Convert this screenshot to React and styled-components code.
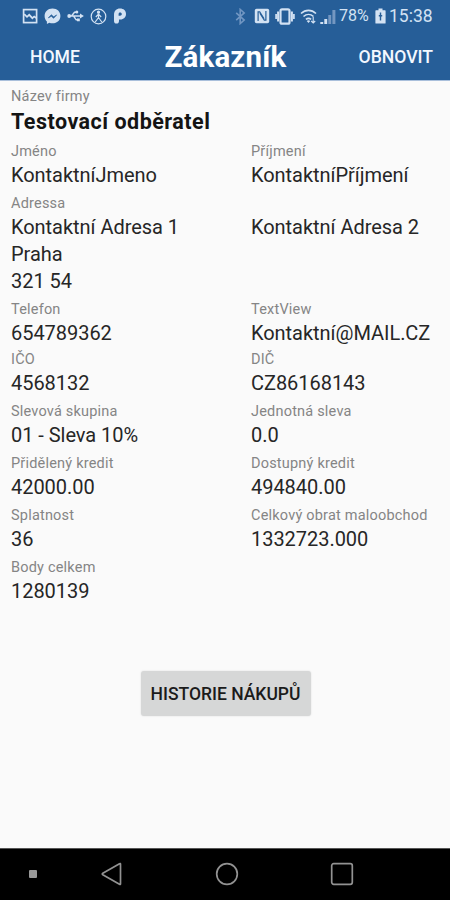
import React from 'react';
import styled, { createGlobalStyle } from 'styled-components';

const GlobalStyle = createGlobalStyle`
  * { box-sizing: border-box; }
  body { margin: 0; background: #fafafa; font-family: Roboto, "Liberation Sans", sans-serif; }
`;

const Screen = styled.div`
  width: 450px;
  height: 900px;
  display: flex;
  flex-direction: column;
  background: #fafafa;
  overflow: hidden;
`;

const Header = styled.header`
  height: 81px;
  flex: none;
  background: #265e98;
  border-bottom: 1px solid #a9bfdb;
`;

const StatusBar = styled.div`
  height: 32px;
  padding: 0 18px 0 22px;
  display: flex;
  align-items: center;
  justify-content: space-between;
  color: #d3e2f3;
`;

const StatusGroup = styled.div`
  display: flex;
  align-items: center;
  gap: ${(p) => p.$gap}px;
  svg { display: block; flex: none; }
`;

const StatusText = styled.span`
  width: ${(p) => p.$width}px;
  font-size: ${(p) => p.$size}px;
  line-height: 20px;
  white-space: nowrap;
`;

const Toolbar = styled.div`
  height: 48px;
  padding: 0 17px 0 30px;
  display: grid;
  grid-template-columns: 134.5px auto 1fr;
  align-items: center;
  color: #fff;
`;

const ToolbarButton = styled.button`
  border: 0;
  padding: 1px 0 0;
  background: none;
  color: #f3f8ff;
  font: 500 17.6px/24px Roboto, sans-serif;
  justify-self: ${(p) => p.$side};
`;

const Title = styled.h1`
  margin: 0;
  padding-top: 1px;
  font-size: 29.5px;
  line-height: 36px;
  font-weight: 700;
  letter-spacing: 0.15px;
`;

const Details = styled.main`
  flex: 1;
  padding: 5px 0 0 11px;
  display: flex;
  flex-direction: column;
`;

const Row = styled.section`
  display: grid;
  grid-template-columns: 240px 1fr;
  height: ${(p) => p.$height || 52}px;
`;

const Field = styled.div`
  white-space: nowrap;
`;

const Label = styled.div`
  height: 21px;
  font-size: 14.5px;
  line-height: 21px;
  letter-spacing: 0.2px;
  color: #858585;
`;

const Value = styled.div`
  font-size: ${(p) => (p.$bold ? 21.5 : 20)}px;
  line-height: 27px;
  letter-spacing: ${(p) => (p.$bold ? 0.48 : -0.04)}px;
  font-weight: ${(p) => (p.$bold ? 700 : 400)};
  padding-top: ${(p) => (p.$bold ? 1 : 0)}px;
  color: ${(p) => (p.$bold ? '#141414' : '#262626')};
`;

const HistoryButton = styled.button`
  width: 170px;
  height: 45px;
  margin: 62px 0 0 129.5px;
  padding: 0;
  border: 0;
  border-radius: 3px;
  background: #d6d7d7;
  color: #1b1b1b;
  font: 500 17.5px/46px Roboto, sans-serif;
  white-space: nowrap;
  box-shadow: 0 0 2px #dcdddd;
`;

const NavBar = styled.nav`
  height: 52px;
  flex: none;
  background: #000;
  border-top: 1px solid #555;
  padding-bottom: 2px;
  display: grid;
  grid-template-columns: 65px 94px 136px 94px 61px;
  align-items: center;
  justify-items: center;
  svg { display: block; }
`;

const PictureIcon = () => (
  <svg width="16" height="16" viewBox="0 0 16 16" fill="none" stroke="currentColor" strokeWidth="1.7">
    <rect x="1.6" y="1.6" width="13" height="13" />
    <path d="M2.200 6.200 5 8.800l2.200-2 3.200 3.400 1.800-1.700 2.200 1.500" />
  </svg>
);

const MessengerIcon = () => (
  <svg width="17" height="17" viewBox="0 0 17 17">
    <path d="M8.500.5C3.800.5.6 3.700.6 8c0 2.300.9 4.200 2.300 5.500V16l2.400-1.300c1 .4 2.100.5 3.200.5 4.700 0 7.900-3.100 7.900-7.300S13.200.5 8.500.5Z" fill="currentColor" />
    <path d="m4.300 9.900 3-3.200 2.400 2.100 3-1.900-3.100 3.400-2.300-2Z" fill="#265e98" stroke="#265e98" strokeWidth=".6" />
  </svg>
);

const UsbIcon = () => (
  <svg width="17" height="14" viewBox="0 0 17 14" fill="none" stroke="currentColor" strokeWidth="1.400">
    <path d="M2 7h12M4.500 7l3-3.800H9M6.500 7l2.700 3.800h1.500" />
    <circle cx="2.200" cy="7" r="1.900" fill="currentColor" stroke="none" />
    <circle cx="9.800" cy="3" r="1.500" fill="currentColor" stroke="none" />
    <path d="M10 9.500h2.800v2.800H10zM13 4.600 16.900 7 13 9.400z" fill="currentColor" stroke="none" />
  </svg>
);

const PersonCircleIcon = () => (
  <svg width="17" height="17" viewBox="0 0 17 17" fill="none" stroke="currentColor" strokeWidth="1.200">
    <circle cx="8.500" cy="8.500" r="7.300" />
    <circle cx="8.500" cy="4.200" r="1" fill="currentColor" />
    <path d="M8.500 5.500v4L5.200 14M8.500 9.500l3.300 4.500M8.500 6.200 5.800 9M8.500 6.200 11.200 9" />
  </svg>
);

const ParkingIcon = () => (
  <svg width="14" height="16" viewBox="0 0 14 16">
    <path fillRule="evenodd" d="M1 7C1 3 3.400.6 7 .6c3.700 0 6 2.200 6 5.300s-2.300 5.500-5.600 5.500H6V13c0 1.600-.9 2.600-2.500 2.600S1 14.600 1 13ZM5.600 7.700H7c1.100 0 1.800-.7 1.800-1.700S8.100 4.400 7.100 4.400s-1.500.6-1.500 1.600Z" fill="currentColor" />
  </svg>
);

const BluetoothIcon = () => (
  <svg width="11" height="17" viewBox="0 0 11 17" fill="none" stroke="#7196c2" strokeWidth="1.600">
    <path d="m1.200 4.900 8 7.200-4 3.500V1.400l4 3.500-8 7.200" />
  </svg>
);

const NfcIcon = () => (
  <svg width="16" height="16" viewBox="0 0 16 16">
    <path d="M2.500.8h11q1.700 0 1.700 1.700v11q0 1.700-1.700 1.700h-11Q.8 15.200.8 13.500v-11Q.8.800 2.500.8Z" fill="currentColor" />
    <path d="M4.100 13V3.800h1.600l4.400 6.900M11.900 3v9.200h-1.600L5.900 5.300" fill="none" stroke="#265e98" strokeWidth="1.200" />
  </svg>
);

const VibrateIcon = () => (
  <svg width="20" height="17" viewBox="0 0 20 17" fill="none" stroke="currentColor">
    <rect x="5.500" y="1.300" width="9" height="14.400" rx="1.500" strokeWidth="2.200" />
    <path d="M3.100 3.500v10M16.900 3.500v10" strokeWidth="2" />
    <path d="M1.100 6v5M18.900 6v5" strokeWidth="1.700" />
  </svg>
);

const WifiIcon = () => (
  <svg width="17" height="16" viewBox="0 0 17 16" fill="none" stroke="currentColor" strokeWidth="1.600">
    <path d="M1 5.500c4.500-4.200 10.500-4.200 15 0M3.500 8.500c3-2.700 7-2.700 10 0M5.900 11.400c1.600-1.300 3.600-1.300 5.200 0" />
    <path d="m8.500 15-1.800-2c1-.9 2.600-.9 3.600 0Z" fill="currentColor" stroke="none" />
    <path d="M13.200 9v6M11.200 13l2 2 2-2" strokeWidth="1.100" />
  </svg>
);

const SignalIcon = () => (
  <svg width="16" height="15" viewBox="0 0 16 15">
    <path d="M.3 13h2.900v2H.3zM4.300 10h2.900v5H4.300z" fill="currentColor" />
    <path d="M8.300 6h2.900v9H8.300zM12.400 1h3v14h-3z" fill="#7497c1" />
  </svg>
);

const BatteryIcon = () => (
  <svg width="11" height="16" viewBox="0 0 11 16">
    <path d="M3.500.5h4v1.800H10q.6 0 .6.600v12q0 .6-.6.600H1q-.6 0-.6-.6v-12q0-.6.6-.6h2.500Z" fill="currentColor" />
    <path d="M5.500 4.500v8M3.800 7.800h3.400" stroke="#265e98" strokeWidth="1.400" />
  </svg>
);

const rows = [
  { height: 55, fields: [{ label: 'Název firmy', lines: ['Testovací odběratel'], bold: true }] },
  { fields: [{ label: 'Jméno', lines: ['KontaktníJmeno'] }, { label: 'Příjmení', lines: ['KontaktníPříjmení'] }] },
  { height: 106, fields: [{ label: 'Adressa', lines: ['Kontaktní Adresa 1', 'Praha', '321 54'] }, { label: '', lines: ['Kontaktní Adresa 2'] }] },
  { height: 50, fields: [{ label: 'Telefon', lines: ['654789362'] }, { label: 'TextView', lines: ['Kontaktní@MAIL.CZ'] }] },
  { fields: [{ label: 'IČO', lines: ['4568132'] }, { label: 'DIČ', lines: ['CZ86168143'] }] },
  { fields: [{ label: 'Slevová skupina', lines: ['01 - Sleva 10%'] }, { label: 'Jednotná sleva', lines: ['0.0'] }] },
  { fields: [{ label: 'Přidělený kredit', lines: ['42000.00'] }, { label: 'Dostupný kredit', lines: ['494840.00'] }] },
  { fields: [{ label: 'Splatnost', lines: ['36'] }, { label: 'Celkový obrat maloobchod', lines: ['1332723.000'] }] },
  { fields: [{ label: 'Body celkem', lines: ['1280139'] }] },
];

export default function App() {
  return (
    <Screen>
      <GlobalStyle />
      <Header>
        <StatusBar>
          <StatusGroup $gap={6}>
            <PictureIcon />
            <MessengerIcon />
            <UsbIcon />
            <PersonCircleIcon />
            <ParkingIcon />
          </StatusGroup>
          <StatusGroup $gap={3}>
            <StatusGroup $gap={5}>
              <StatusGroup $gap={8}>
                <BluetoothIcon />
                <NfcIcon />
              </StatusGroup>
              <VibrateIcon />
              <WifiIcon />
            </StatusGroup>
            <SignalIcon />
            <StatusText $size={16} $width={33}>78%</StatusText>
            <BatteryIcon />
            <StatusText $size={17.5} $width={43}>15:38</StatusText>
          </StatusGroup>
        </StatusBar>
        <Toolbar>
          <ToolbarButton $side="start">HOME</ToolbarButton>
          <Title>Zákazník</Title>
          <ToolbarButton $side="end">OBNOVIT</ToolbarButton>
        </Toolbar>
      </Header>
      <Details>
        {rows.map((row) => (
          <Row key={row.fields[0].label} $height={row.height}>
            {row.fields.map((field) => (
              <Field key={field.label}>
                <Label>{field.label}</Label>
                {field.lines.map((line) => (
                  <Value key={line} $bold={field.bold}>{line}</Value>
                ))}
              </Field>
            ))}
          </Row>
        ))}
        <HistoryButton>HISTORIE NÁKUPŮ</HistoryButton>
      </Details>
      <NavBar>
        <svg width="8" height="8"><rect width="8" height="8" rx="1" fill="#999" /></svg>
        <svg width="22" height="24" viewBox="0 0 22 24" fill="none" stroke="#929292" strokeWidth="1.700" strokeLinejoin="round">
          <path d="M18.500 1.700q1-.5 1 .6v19.400q0 1.100-1 .5L1.800 12.700q-1.100-.7 0-1.400Z" />
        </svg>
        <svg width="24" height="24"><circle cx="12" cy="12" r="10.300" fill="none" stroke="#929292" strokeWidth="1.700" /></svg>
        <svg width="24" height="24"><rect x="1.700" y="1.700" width="20.600" height="20.600" rx="2" fill="none" stroke="#929292" strokeWidth="1.700" /></svg>
        <span />
      </NavBar>
    </Screen>
  );
}
